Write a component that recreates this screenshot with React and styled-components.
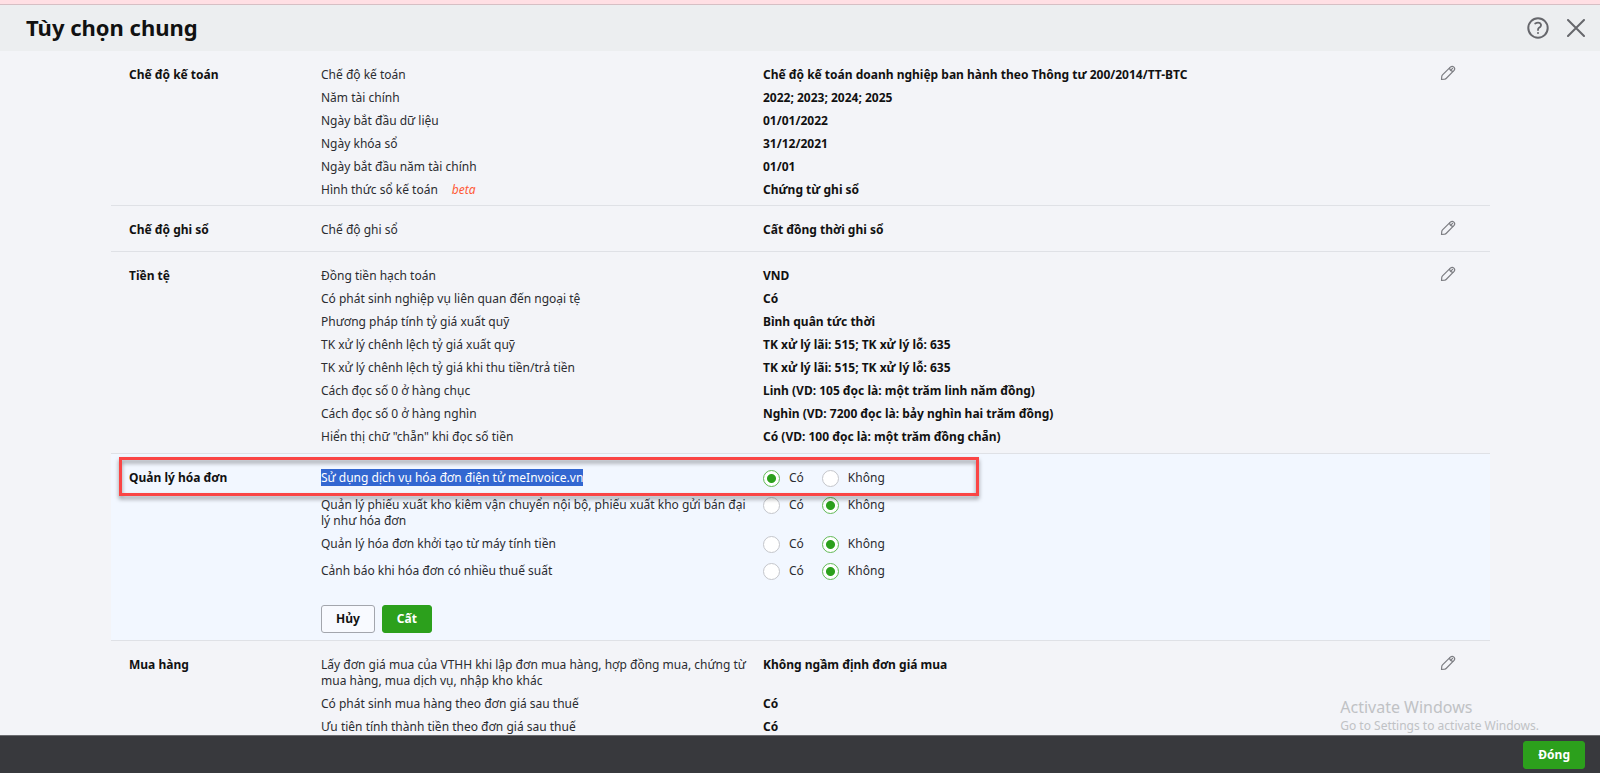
import { useState } from "react";
import styled, { createGlobalStyle } from "styled-components";

const sections = [
  {
    title: "Chế độ kế toán",
    space: 7,
    rows: [
      { label: "Chế độ kế toán", value: "Chế độ kế toán doanh nghiệp ban hành theo Thông tư 200/2014/TT-BTC" },
      { label: "Năm tài chính", value: "2022; 2023; 2024; 2025" },
      { label: "Ngày bắt đầu dữ liệu", value: "01/01/2022" },
      { label: "Ngày khóa sổ", value: "31/12/2021" },
      { label: "Ngày bắt đầu năm tài chính", value: "01/01" },
      { label: "Hình thức sổ kế toán", value: "Chứng từ ghi sổ", beta: true },
    ],
  },
  {
    title: "Chế độ ghi sổ",
    space: 13,
    rows: [{ label: "Chế độ ghi sổ", value: "Cất đồng thời ghi sổ" }],
  },
  {
    title: "Tiền tệ",
    space: 8,
    rows: [
      { label: "Đồng tiền hạch toán", value: "VND" },
      { label: "Có phát sinh nghiệp vụ liên quan đến ngoại tệ", value: "Có" },
      { label: "Phương pháp tính tỷ giá xuất quỹ", value: "Bình quân tức thời" },
      { label: "TK xử lý chênh lệch tỷ giá xuất quỹ", value: "TK xử lý lãi: 515; TK xử lý lỗ: 635" },
      { label: "TK xử lý chênh lệch tỷ giá khi thu tiền/trả tiền", value: "TK xử lý lãi: 515; TK xử lý lỗ: 635" },
      { label: "Cách đọc số 0 ở hàng chục", value: "Linh (VD: 105 đọc là: một trăm linh năm đồng)" },
      { label: "Cách đọc số 0 ở hàng nghìn", value: "Nghìn (VD: 7200 đọc là: bảy nghìn hai trăm đồng)" },
      { label: "Hiển thị chữ \"chẵn\" khi đọc số tiền", value: "Có (VD: 100 đọc là: một trăm đồng chẵn)" },
    ],
  },
];

const purchase = {
  title: "Mua hàng",
  space: 13,
  rows: [
    {
      label: "Lấy đơn giá mua của VTHH khi lập đơn mua hàng, hợp đồng mua, chứng từ mua hàng, mua dịch vụ, nhập kho khác",
      value: "Không ngầm định đơn giá mua",
    },
    { label: "Có phát sinh mua hàng theo đơn giá sau thuế", value: "Có" },
    { label: "Ưu tiên tính thành tiền theo đơn giá sau thuế", value: "Có" },
  ],
};

const invoiceOptions = [
  { id: "meinvoice", label: "Sử dụng dịch vụ hóa đơn điện tử meInvoice.vn", selected: true },
  { id: "transfer", label: "Quản lý phiếu xuất kho kiêm vận chuyển nội bộ, phiếu xuất kho gửi bán đại lý như hóa đơn" },
  { id: "register", label: "Quản lý hóa đơn khởi tạo từ máy tính tiền" },
  { id: "taxrate", label: "Cảnh báo khi hóa đơn có nhiều thuế suất" },
];

function Pencil() {
  return (
    <svg width="16" height="16" viewBox="0 0 16 16" fill="none" stroke="#7c7d82" strokeWidth="1.2" strokeLinejoin="round" strokeLinecap="round">
      <path d="M1.5 14.5 1.8 11.2Q2 10.4 2.5 9.9L10.6 1.9Q12.3.6 13.9 2.1 15.4 3.7 14.1 5.4L6.1 13.5Q5.6 14 4.8 14.2L1.5 14.5Z" />
      <path d="M9.6 3.2Q9.9 6 12.8 6.4M11.3 4.7 12.6 3.4" />
    </svg>
  );
}

function Section({ data }) {
  return (
    <SectionBox space={data.space}>
      <SectionTitle>{data.title}</SectionTitle>
      <Rows>
        {data.rows.map((row) => (
          <Row key={row.label}>
            <Label>
              {row.label}
              {row.beta && <Beta>beta</Beta>}
            </Label>
            <Value>{row.value}</Value>
          </Row>
        ))}
      </Rows>
      <EditButton aria-label={`Sửa ${data.title}`}>
        <Pencil />
      </EditButton>
    </SectionBox>
  );
}

function InvoiceSection() {
  const [answers, setAnswers] = useState({
    meinvoice: "yes",
    transfer: "no",
    register: "no",
    taxrate: "no",
  });

  function choose(id, answer) {
    setAnswers({ ...answers, [id]: answer });
  }

  return (
    <EditingBox space={7}>
      <SectionTitle>Quản lý hóa đơn</SectionTitle>
      <Rows>
        {invoiceOptions.map(({ id, label, selected }) => (
          <EditRow key={id} role="radiogroup" aria-labelledby={`${id}-label`}>
            <Label id={`${id}-label`}>{selected ? <Selected>{label}</Selected> : label}</Label>
            <Choices>
              <Choice>
                <Radio name={id} checked={answers[id] === "yes"} onChange={() => choose(id, "yes")} />
                Có
              </Choice>
              <Choice>
                <Radio name={id} checked={answers[id] === "no"} onChange={() => choose(id, "no")} />
                Không
              </Choice>
            </Choices>
          </EditRow>
        ))}
        <Actions>
          <Button>Hủy</Button>
          <Button $primary>Cất</Button>
        </Actions>
      </Rows>
      <Highlight />
    </EditingBox>
  );
}

export default function App() {
  return (
    <>
      <GlobalStyle />
      <Page>
        <Header>
          <Title>Tùy chọn chung</Title>
          <HeaderIcons>
            <IconButton aria-label="Trợ giúp">
              <svg width="22" height="22" viewBox="0 0 22 22" fill="none" stroke="#66676c" strokeWidth="2" strokeLinecap="round">
                <circle cx="11" cy="11" r="9.7" />
                <path d="M8.2 6.6Q10.8 5 13 6.1 14.6 7.3 13.7 9.2 13.2 10.1 12 10.8 11 11.5 11 13" strokeWidth="1.8" />
                <path d="M11 16V16.1" />
              </svg>
            </IconButton>
            <IconButton aria-label="Đóng cửa sổ">
              <svg width="18" height="18" viewBox="0 0 18 18" fill="none" stroke="#66676c" strokeWidth="2" strokeLinecap="round">
                <path d="M1 1 17 17M17 1 1 17" />
              </svg>
            </IconButton>
          </HeaderIcons>
        </Header>
        <Content>
          {sections.map((item) => (
            <Section key={item.title} data={item} />
          ))}
          <InvoiceSection />
          <Section data={purchase} />
          <Watermark>
            <p>Activate Windows</p>
            <small>Go to Settings to activate Windows.</small>
          </Watermark>
        </Content>
        <Footer>
          <Button $primary>Đóng</Button>
        </Footer>
      </Page>
    </>
  );
}

const GlobalStyle = createGlobalStyle`
  * {
    box-sizing: border-box;
  }

  body {
    margin: 0;
    font-family: "Noto Sans", sans-serif;
    font-size: 12px;
    line-height: 16px;
    color: #111111;
  }

  h1, h2, p {
    margin: 0;
  }
`;

const Page = styled.div`
  height: 100vh;
  display: flex;
  flex-direction: column;
  background-color: #f3f4f8;
  border-top: 4px solid #ffdfe4;
`;

const Header = styled.header`
  display: flex;
  flex-shrink: 0;
  justify-content: space-between;
  align-items: center;
  height: 47px;
  padding: 0 15px 0 26px;
  background-color: #eceef0;
  border-top: 1px solid #d6bfc4;
`;

const Title = styled.h1`
  padding-bottom: 3px;
  font-size: 22px;
  line-height: 30px;
  font-weight: bold;
`;

const HeaderIcons = styled.div`
  display: flex;
  align-items: center;
  gap: 18px;
`;

const IconButton = styled.button`
  display: flex;
  padding: 0;
  border: none;
  background: none;
  cursor: pointer;
`;

const EditButton = styled(IconButton)`
  margin-top: -2px;
`;

const Content = styled.main`
  position: relative;
  flex: 1;
  min-height: 0;
  overflow: hidden;
  padding: 0 110px 0 111px;
`;

const SectionBox = styled.section.withConfig({ shouldForwardProp: (prop) => prop !== "space" })`
  display: flex;
  align-items: flex-start;
  padding: 16px 34px ${({ space }) => space}px 18px;
  border-bottom: 1px solid #dfe1e6;
`;

const EditingBox = styled(SectionBox)`
  position: relative;
  background-color: #f2f7ff;
`;

const SectionTitle = styled.h2`
  width: 192px;
  flex-shrink: 0;
  font-size: 12px;
  line-height: 16px;
  font-weight: bold;
`;

const Rows = styled.div`
  display: flex;
  flex: 1;
  flex-direction: column;
  gap: 7px;
`;

const Row = styled.div`
  display: grid;
  grid-template-columns: 428px 1fr;
  column-gap: 14px;
`;

const EditRow = styled(Row)`
  min-height: 20px;
`;

const Label = styled.div`
  color: #2b2c30;
`;

const Value = styled.div`
  font-weight: bold;
`;

const Beta = styled.em`
  margin-left: 14px;
  color: #ff5a36;
`;

const Selected = styled.span`
  background-color: #3367d1;
  color: #ffffff;
`;

const Choices = styled.div`
  display: flex;
  gap: 18px;
  height: 16px;
`;

const Choice = styled.label`
  display: flex;
  align-items: center;
  gap: 9px;
  color: #2b2c30;
`;

const Radio = styled.input.attrs({ type: "radio" })`
  appearance: none;
  width: 17px;
  height: 17px;
  margin: 0;
  border: 1px solid #c4c6cb;
  border-radius: 50%;
  background-color: #ffffff;

  &:checked {
    border-color: #62b956;
    background-image: radial-gradient(circle, #2ca01c 4px, #ffffff 5px);
  }
`;

const Actions = styled.div`
  display: flex;
  gap: 7px;
  margin-top: 15px;
`;

const Button = styled.button`
  height: 28px;
  padding: 0 14px;
  border: 1px solid ${({ $primary }) => ($primary ? "#2ca01c" : "#a3a6ad")};
  border-radius: 3px;
  background-color: ${({ $primary }) => ($primary ? "#2ca01c" : "#f8faff")};
  color: ${({ $primary }) => ($primary ? "#ffffff" : "#111111")};
  font-family: inherit;
  font-size: 12px;
  line-height: 16px;
  font-weight: bold;
  cursor: pointer;
`;

// marks the option that the user has to turn on
const Highlight = styled.div`
  position: absolute;
  top: 3px;
  left: 8px;
  width: 860px;
  height: 39px;
  border: 3px solid #fa4545;
  filter: drop-shadow(0 3px 2px rgba(0, 0, 0, 0.4));
  pointer-events: none;
`;

const Watermark = styled.div`
  position: absolute;
  right: 61px;
  bottom: 0;
  color: #c0c2c5;
  pointer-events: none;

  p {
    font-size: 16px;
    line-height: 20px;
  }

  small {
    display: block;
    font-size: 12px;
    line-height: 18px;
  }
`;

const Footer = styled.footer`
  display: flex;
  flex-shrink: 0;
  justify-content: flex-end;
  align-items: center;
  height: 38px;
  padding: 0 15px;
  border-top: 1px solid #6b6c70;
  background-color: #38393d;
`;
